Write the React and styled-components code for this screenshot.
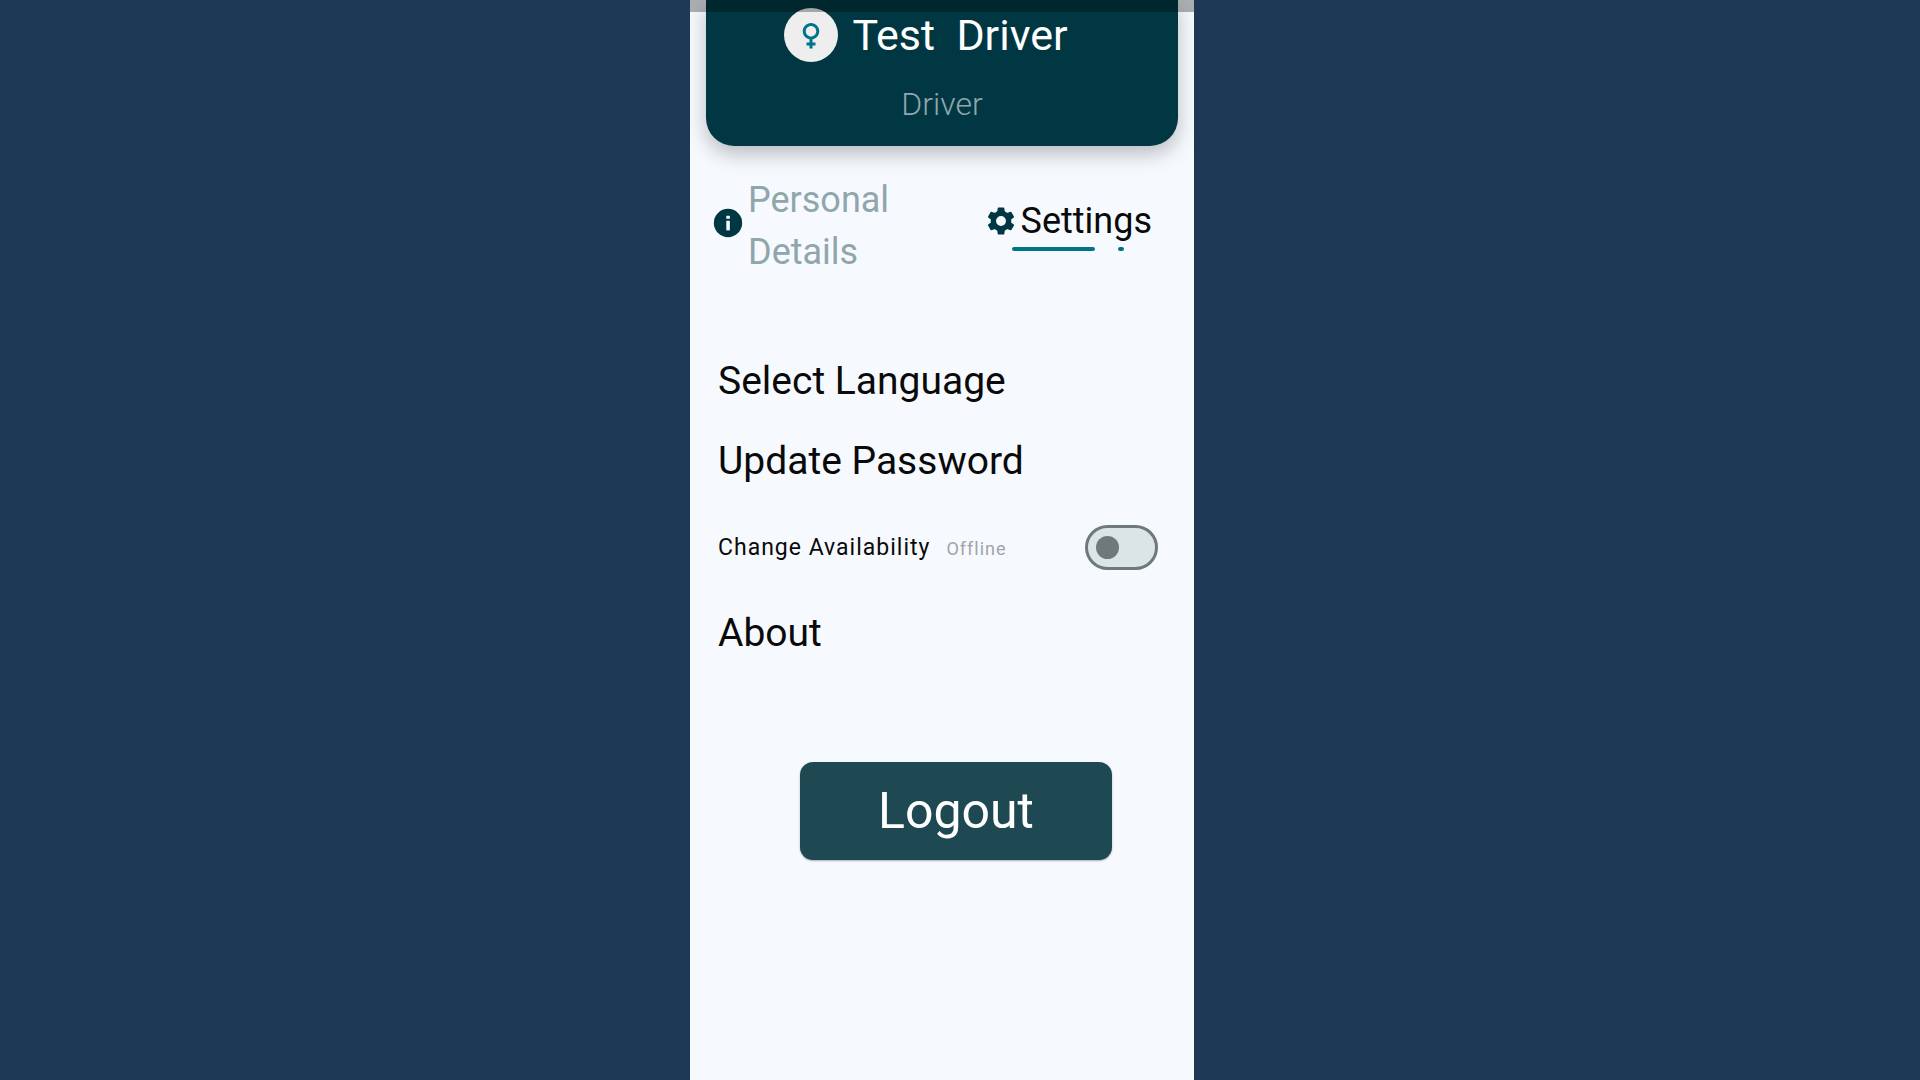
import React, { useState } from 'react';
import styled, { createGlobalStyle } from 'styled-components';
import { MdFemale } from 'react-icons/md';


function InfoIcon({size}){
    return (
        <svg width={size} height={size} viewBox="0 0 24 24" aria-hidden="true">
            <circle cx="12" cy="12" r="10" fill="currentColor"/>
            <rect x="10.8" y="6.9" width="2.5" height="2.1" fill="#f6faff"/>
            <rect x="10.8" y="10.4" width="2.5" height="6.8" fill="#f6faff"/>
        </svg>
    )
}

function GearIcon({size}){
    const teeth = [0, 60, 120, 180, 240, 300];

    return (
        <svg width={size} height={size} viewBox="0 0 24 24" aria-hidden="true">
            <circle cx="12" cy="12" r="5.4" fill="none" stroke="currentColor" strokeWidth="3.8"/>
            {teeth.map(angle => (
                <path
                    key={angle}
                    d="M8.6 6.6 9.4 5 9.7 2.9Q9.8 2.5 10.2 2.5H13.8Q14.2 2.5 14.3 2.9L14.6 5 15.4 6.6Z"
                    fill="currentColor"
                    transform={`rotate(${angle} 12 12)`}
                />
            ))}
        </svg>
    )
}

export default function App(){
    const[tab,setTab] = useState('settings');
    const[online,setOnline] = useState(false);

    return (
        <Page>
            <GlobalStyle/>
            <Phone>
                <StatusBar/>
                <ProfileCard>
                    <NameRow>
                        <Avatar><MdFemale size={36}/></Avatar>
                        <Name>{'Test  Driver'}</Name>
                    </NameRow>
                    <Role>Driver</Role>
                </ProfileCard>

                <Tabs>
                    <Tab type="button" onClick={()=>setTab('details')}>
                        <TabIcon $raised><InfoIcon size={34}/></TabIcon>
                        <TabLabel $active={tab === 'details'}>Personal Details</TabLabel>
                    </Tab>
                    <TabColumn>
                        <Tab type="button" onClick={()=>setTab('settings')}>
                            <TabIcon><GearIcon size={34}/></TabIcon>
                            <TabLabel $active={tab === 'settings'}>Settings</TabLabel>
                        </Tab>
                        <Underline>
                            <Dash $width={83}/>
                            <Dash $width={6}/>
                        </Underline>
                    </TabColumn>
                </Tabs>

                <Menu>
                    <MenuItem type="button">Select Language</MenuItem>
                    <MenuItem type="button">Update Password</MenuItem>
                    <SwitchRow>
                        <SwitchText>
                            <SwitchLabel htmlFor="availability">Change Availability</SwitchLabel>
                            <SwitchState>{online ? 'Online' : 'Offline'}</SwitchState>
                        </SwitchText>
                        <Switch id="availability" type="checkbox" checked={online} onChange={(e)=>setOnline(e.target.checked)}/>
                    </SwitchRow>
                    <MenuItem type="button">About</MenuItem>
                    <LogoutButton type="button">Logout</LogoutButton>
                </Menu>
            </Phone>
        </Page>
    )
}

const GlobalStyle = createGlobalStyle`
* {
    box-sizing: border-box;
}
body {
    margin: 0;
    background-color: #1e3956;
    font-family: Roboto, "Liberation Sans", sans-serif;
}
button {
    margin: 0;
    padding: 0;
    border: none;
    background: none;
    font-family: inherit;
    cursor: pointer;
}
`
const Page = styled.div`
display: grid;
grid-template-columns: 115fr 84fr 121fr;
min-height: 100vh;
`
const Phone = styled.main`
grid-column: 2;
position: relative;
display: flex;
flex-direction: column;
background-color: #f6faff;
overflow: hidden;
`
const StatusBar = styled.div`
position: absolute;
top: 0;
left: 0;
right: 0;
z-index: 1;
height: 12px;
background-color: rgba(0, 0, 0, 0.3);
`
const ProfileCard = styled.header`
display: flex;
flex-direction: column;
align-items: center;
gap: 23px;
margin: 0 16px;
padding: 8px 0 23px;
border-radius: 0 0 28px 28px;
background-color: #003743;
box-shadow: 0 8px 20px rgba(0, 0, 0, 0.25);
`
const NameRow = styled.div`
display: flex;
align-items: center;
gap: 14px;
padding-right: 32px;
`
const Avatar = styled.div`
display: flex;
align-items: center;
justify-content: center;
width: 54px;
height: 54px;
border-radius: 50%;
background-color: #eeeeee;
color: #00738a;
`
const Name = styled.h1`
margin: 0;
color: white;
font-size: 43px;
font-weight: 400;
line-height: 52px;
white-space: pre;
`
const Role = styled.div`
color: #8fa7ad;
font-size: 32px;
font-weight: 300;
line-height: 38px;
`
const Tabs = styled.nav`
display: flex;
justify-content: space-between;
align-items: center;
margin-top: 28px;
padding: 0 42px 0 21px;
`
const TabColumn = styled.div`
display: flex;
flex-direction: column;
padding-bottom: 6px;
`
const Tab = styled.button`
display: flex;
align-items: center;
gap: 3px;
text-align: left;
`
const TabIcon = styled.span`
display: flex;
padding-bottom: ${props => props.$raised ? '6px' : '0'};
color: #003743;
`
const TabLabel = styled.span`
max-width: 160px;
color: ${props => props.$active ? '#0a0a0a' : '#90a6aa'};
font-size: 36px;
line-height: 52px;
`
const Underline = styled.div`
display: flex;
gap: 23px;
padding-left: 28px;
`
const Dash = styled.span`
width: ${props => props.$width}px;
height: 4px;
border-radius: 2px;
background-color: #00738a;
`
const Menu = styled.section`
display: flex;
flex-direction: column;
margin-top: 63px;
padding-left: 28px;
`
const MenuItem = styled.button`
height: 80px;
color: #0a0a0a;
font-size: 39px;
text-align: left;
`
const SwitchRow = styled.div`
display: flex;
align-items: center;
justify-content: space-between;
height: 92px;
padding-right: 36px;
`
const SwitchText = styled.div`
display: flex;
align-items: baseline;
gap: 16px;
letter-spacing: 1px;
`
const SwitchLabel = styled.label`
color: #0a0a0a;
font-size: 23px;
`
const SwitchState = styled.span`
color: #a0a4a8;
font-size: 18px;
`
const Switch = styled.input`
appearance: none;
display: flex;
align-items: center;
width: 73px;
height: 45px;
margin: 0;
padding: 0 8px;
border: 3px solid #6f7979;
border-radius: 23px;
background-color: #dbe4e6;
cursor: pointer;

&::before {
    content: '';
    width: 23px;
    height: 23px;
    border-radius: 50%;
    background-color: #6f7979;
}
&:checked {
    justify-content: flex-end;
    background-color: #00738a;
}
&:checked::before {
    background-color: white;
}
`
const LogoutButton = styled.button`
align-self: center;
min-width: 312px;
height: 98px;
margin: 89px 0;
border-radius: 13px;
background-color: #1e4852;
box-shadow: 0 1px 2px rgba(0, 0, 0, 0.3);
color: white;
font-size: 50px;
`
